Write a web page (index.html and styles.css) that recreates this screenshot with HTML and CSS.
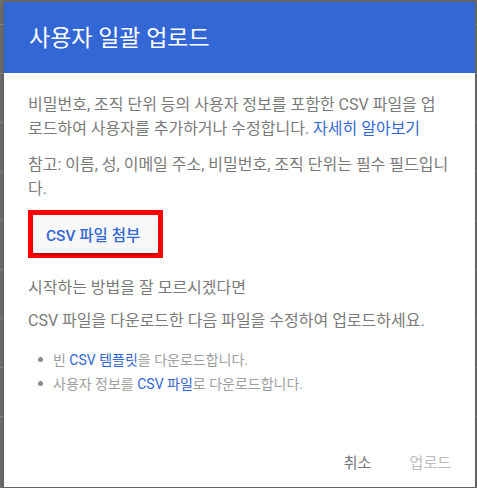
FILE: index.html
```html
<!DOCTYPE html>
<html lang="ko">
<head>
  <meta charset="UTF-8" />
  <meta name="viewport" content="width=device-width, initial-scale=1.0"/>
  <title>사용자 일괄 업로드</title>
  <link rel="stylesheet" href="styles.css">
</head>
<body>
  <div class="dialog">
    <header class="dialog-header">
      <h1>사용자 일괄 업로드</h1>
    </header>

    <div class="dialog-body">
      <p class="intro">비밀번호, 조직 단위 등의 사용자 정보를 포함한 CSV 파일을 업로드하여 사용자를 추가하거나 수정합니다. <a href="#">자세히 알아보기</a></p>
      <p>참고: 이름, 성, 이메일 주소, 비밀번호, 조직 단위는 필수 필드입니다.</p>

      <div class="highlight">
        <button type="button" class="attach-btn">CSV 파일 첨부</button>
      </div>

      <p class="hint">시작하는 방법을 잘 모르시겠다면</p>
      <p class="hint-sub">CSV 파일을 다운로드한 다음 파일을 수정하여 업로드하세요.</p>

      <ul class="downloads">
        <li>빈 <a href="#">CSV 템플릿</a>을 다운로드합니다.</li>
        <li>사용자 정보를 <a href="#">CSV 파일</a>로 다운로드합니다.</li>
      </ul>
    </div>

    <div class="dialog-actions">
      <button type="button" class="text-btn">취소</button>
      <button type="button" class="text-btn" disabled>업로드</button>
    </div>
  </div>
</body>
</html>
```

FILE: styles.css
```css
* {
  box-sizing: border-box;
  margin: 0;
  padding: 0;
  font-family: Roboto, 'Noto Sans CJK KR', sans-serif;
}

body {
  width: 477px;
  height: 488px;
  padding: 2px 2px 1px 4px;
  overflow: hidden;
  background-color: #6e6e6e;
  background-image: repeating-linear-gradient(to bottom, transparent 0, transparent 48px, #858585 48px, #858585 49px);
  background-position: 0 -24px;
}

.dialog {
  width: 471px;
  height: 485px;
  background: #fff;
  display: flex;
  flex-direction: column;
  box-shadow: 0 0 4px rgba(0,0,0,0.3);
}

.dialog-header {
  height: 71px;
  background: #3367d6;
  display: flex;
  align-items: center;
  padding: 0 25px 4px;
}

.dialog-header h1 {
  font-size: 23px;
  font-weight: 400;
  color: #fff;
}

.dialog-body {
  flex: 1;
  padding: 20px 22px 0 24px;
  font-size: 16px;
  line-height: 24px;
  color: #7a7a7a;
}

.dialog-body p + p {
  margin-top: 12px;
}

.intro {
  max-width: 418px;
}

a {
  color: #3367d6;
  text-decoration: none;
}

/* red annotation box round the attach button */
.highlight {
  display: flex;
  width: fit-content;
  margin-top: 9px;
  border: 5px solid #ff0000;
}

.attach-btn {
  height: 38px;
  padding: 0 18px 0 13px;
  background: #f8f8f8;
  border: none;
  border-radius: 2px;
  box-shadow: 0 2px 2px rgba(0,0,0,0.24), 0 0 2px rgba(0,0,0,0.12);
  color: #3367d6;
  font-size: 15.5px;
  font-weight: 500;
  cursor: pointer;
}

.dialog-body .hint {
  margin-top: 18px;
}

.dialog-body .hint-sub {
  margin-top: 9px;
}

.downloads {
  margin-top: 15px;
  padding-left: 25px;
  list-style: none;
  font-size: 14px;
  color: #9e9e9e;
}

.downloads li::before {
  content: '';
  display: inline-block;
  width: 5px;
  height: 5px;
  border-radius: 50%;
  background: #8a8a8a;
  vertical-align: middle;
  margin: 0 10px 3px -15px;
}

.dialog-actions {
  display: flex;
  justify-content: flex-end;
  gap: 4px;
  padding: 8px;
}

.text-btn {
  min-width: 64px;
  height: 36px;
  padding: 0 16px;
  background: none;
  border: none;
  font-size: 15px;
  color: #757575;
  cursor: pointer;
}

.text-btn:disabled {
  color: #bdbdbd;
  cursor: default;
}
```
